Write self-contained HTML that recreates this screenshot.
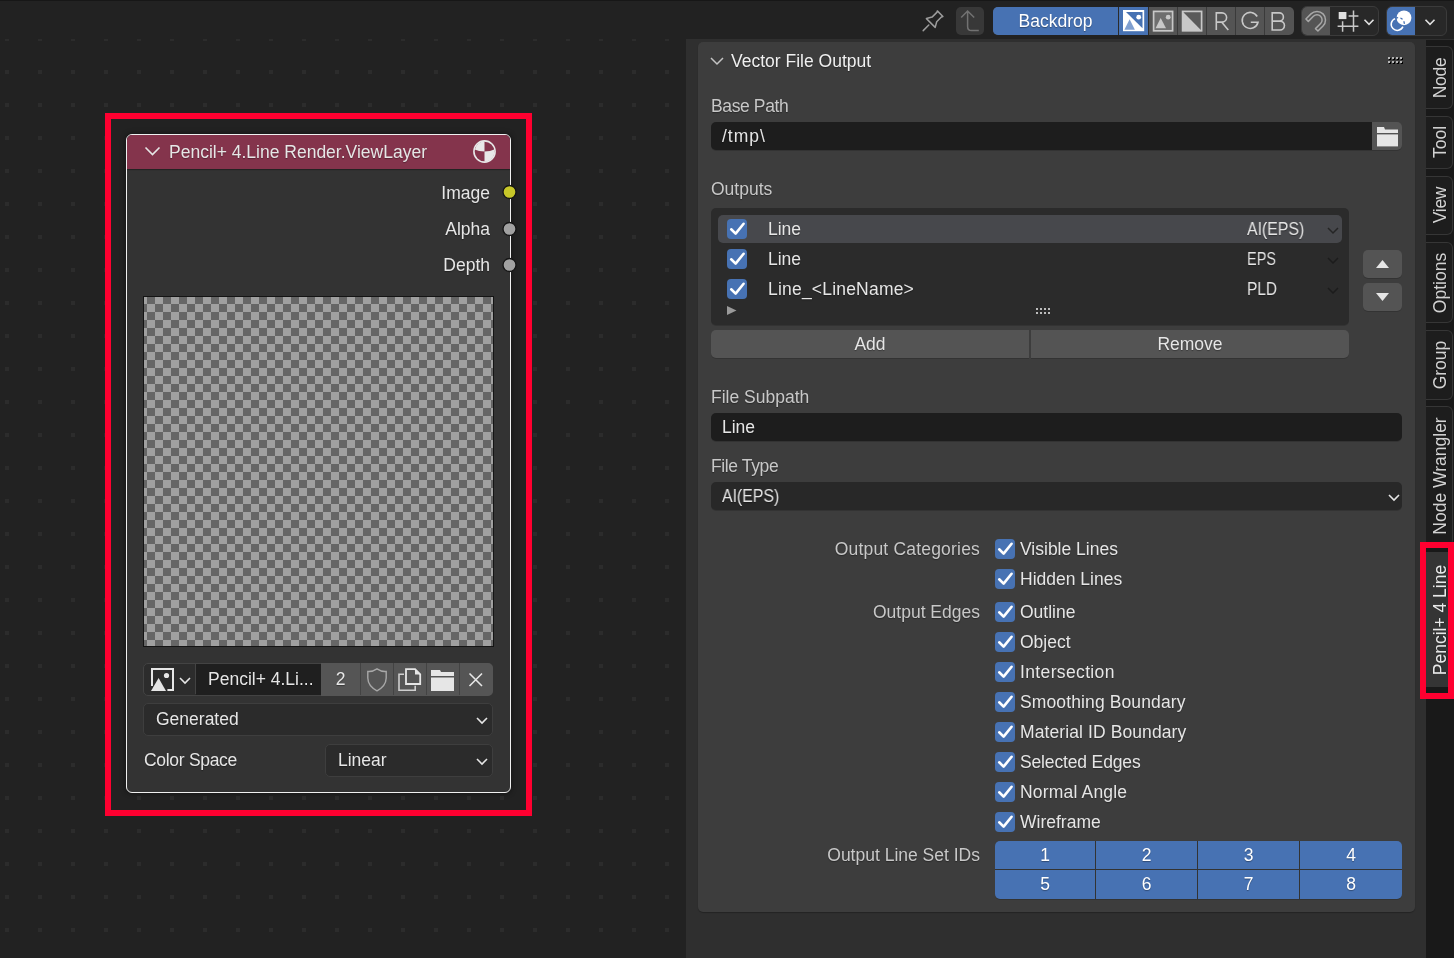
<!DOCTYPE html>
<html><head><meta charset="utf-8">
<style>
*{margin:0;padding:0;box-sizing:border-box}
html,body{width:1454px;height:958px;overflow:hidden;background:#222222;font-family:"Liberation Sans",sans-serif}
.a{position:absolute}
.t{position:absolute;will-change:transform;font-size:17.5px;line-height:20px;white-space:nowrap;color:#e6e6e6;text-shadow:0 1px 1px rgba(0,0,0,.35)}
.r{text-align:right}
.c{text-align:center}
.lbl{color:#c8c8c8}
.em{box-shadow:0 1px 0 rgba(0,0,0,.16)}
svg{position:absolute;overflow:visible}
</style></head><body>
<!-- dot grid -->
<svg style="left:0;top:0" width="1454" height="958"><defs><pattern id="dg" x="5" y="4" width="33" height="33" patternUnits="userSpaceOnUse"><rect width="4" height="4" fill="#2c2c2c"/></pattern></defs><rect width="1454" height="958" fill="url(#dg)"/></svg>


<!-- ============ HEADER ============ -->
<div class="a" style="left:0;top:0;width:1454px;height:39px;background:#222222;border-top:1px solid #171717"></div>

<!-- ============ SIDEBAR ============ -->
<div class="a" style="left:686px;top:39px;width:740px;height:919px;background:#2f2f2f"></div>
<div class="a" style="left:1426px;top:39px;width:28px;height:919px;background:#191919"></div>
<div class="a" style="left:686px;top:39px;width:768px;height:1px;background:#2f2f2f"></div>
<div class="a" style="left:698px;top:42px;width:717px;height:870px;background:#3d3d3d;border-radius:5px;box-shadow:0 1px 1px rgba(0,0,0,.25)"></div>
<!-- panel header -->
<svg style="left:709px;top:55.5px" width="18" height="12"><path d="M2 2 L8 8 L14 2" fill="none" stroke="#c4c4c4" stroke-width="1.5"/></svg>
<div class="t" style="left:731px;top:51px;color:#f0f0f0">Vector File Output</div>
<svg style="left:1388px;top:57px" width="16" height="8">
 <g fill="#000"><rect x="1" y="1" width="2" height="2"/><rect x="5" y="1" width="2" height="2"/><rect x="9" y="1" width="2" height="2"/><rect x="13" y="1" width="2" height="2"/><rect x="1" y="5" width="2" height="2"/><rect x="5" y="5" width="2" height="2"/><rect x="9" y="5" width="2" height="2"/><rect x="13" y="5" width="2" height="2"/></g>
 <g fill="#b4b4b4"><rect x="0" y="0" width="2" height="2"/><rect x="4" y="0" width="2" height="2"/><rect x="8" y="0" width="2" height="2"/><rect x="12" y="0" width="2" height="2"/><rect x="0" y="4" width="2" height="2"/><rect x="4" y="4" width="2" height="2"/><rect x="8" y="4" width="2" height="2"/><rect x="12" y="4" width="2" height="2"/></g>
</svg>

<!-- base path -->
<div class="t lbl" style="left:711px;top:96px;letter-spacing:-0.375px">Base Path</div>
<div class="a em" style="left:711px;top:122px;width:661px;height:28px;background:#1d1d1d;border-radius:5px 0 0 5px"></div>
<div class="t" style="left:722px;top:126px;letter-spacing:1px">/tmp\</div>
<div class="a em" style="left:1372px;top:122px;width:30px;height:28px;background:#545454;border-radius:0 5px 5px 0"></div>
<svg style="left:1376px;top:126px" width="24" height="22" viewBox="0 0 24 22">
  <path d="M1 1 L8 1 L9 3.5 L22 3.5 L22 7 L1 7 Z" fill="#e6e6e6"/>
  <rect x="1" y="8.4" width="21" height="12" fill="#e6e6e6"/>
</svg>

<!-- outputs -->
<div class="t lbl" style="left:711px;top:179px">Outputs</div>
<div class="a em" style="left:711px;top:208px;width:638px;height:117px;background:#2b2b2b;border-radius:5px"></div>
<div class="a" style="left:718px;top:215px;width:624px;height:28px;background:#47484c;border-radius:5px"></div>

<svg style="left:727px;top:219px" width="20" height="20" viewBox="0 0 20 20"><rect x="0" y="0" width="20" height="20" rx="4" fill="#4772b3"/><path d="M4.2 10.3 L8.6 14.6 L16.6 4.8" fill="none" stroke="#ffffff" stroke-width="2.6" stroke-linecap="round" stroke-linejoin="round"/></svg>
<svg style="left:727px;top:249px" width="20" height="20" viewBox="0 0 20 20"><rect x="0" y="0" width="20" height="20" rx="4" fill="#4772b3"/><path d="M4.2 10.3 L8.6 14.6 L16.6 4.8" fill="none" stroke="#ffffff" stroke-width="2.6" stroke-linecap="round" stroke-linejoin="round"/></svg>
<svg style="left:727px;top:279px" width="20" height="20" viewBox="0 0 20 20"><rect x="0" y="0" width="20" height="20" rx="4" fill="#4772b3"/><path d="M4.2 10.3 L8.6 14.6 L16.6 4.8" fill="none" stroke="#ffffff" stroke-width="2.6" stroke-linecap="round" stroke-linejoin="round"/></svg>
<div class="t" style="left:768px;top:219px">Line</div>
<div class="t" style="left:1247px;top:219px;transform:scaleX(0.905);transform-origin:0 0">AI(EPS)</div>
<svg style="left:1326px;top:226px" width="14" height="10"><path d="M2 2 L7 7 L12 2" fill="none" stroke="#252525" stroke-width="1.5"/></svg>
<div class="t" style="left:768px;top:249px">Line</div>
<div class="t" style="left:1247px;top:249px;transform:scaleX(0.83);transform-origin:0 0">EPS</div>
<svg style="left:1326px;top:256px" width="14" height="10"><path d="M2 2 L7 7 L12 2" fill="none" stroke="#1c1c1c" stroke-width="1.5"/></svg>
<div class="t" style="left:768px;top:279px;letter-spacing:0.2px">Line_&lt;LineName&gt;</div>
<div class="t" style="left:1247px;top:279px;transform:scaleX(0.88);transform-origin:0 0">PLD</div>
<svg style="left:1326px;top:286px" width="14" height="10"><path d="M2 2 L7 7 L12 2" fill="none" stroke="#1c1c1c" stroke-width="1.5"/></svg>

<svg style="left:727px;top:306px" width="10" height="10"><path d="M0 0 L9.5 4.5 L0 9 Z" fill="#9a9a9a"/></svg>
<svg style="left:1036px;top:308px" width="16" height="8">
 <g fill="#bdbdbd"><rect x="0" y="0" width="2" height="2"/><rect x="4" y="0" width="2" height="2"/><rect x="8" y="0" width="2" height="2"/><rect x="12" y="0" width="2" height="2"/><rect x="0" y="4" width="2" height="2"/><rect x="4" y="4" width="2" height="2"/><rect x="8" y="4" width="2" height="2"/><rect x="12" y="4" width="2" height="2"/></g>
</svg>
<!-- up/down -->
<div class="a em" style="left:1363px;top:250px;width:39px;height:28px;background:#545454;border-radius:5px"></div>
<div class="a em" style="left:1363px;top:283px;width:39px;height:28px;background:#545454;border-radius:5px"></div>
<svg style="left:1375px;top:258px" width="16" height="12"><path d="M1 10 L7.5 2 L14 10 Z" fill="#e6e6e6"/></svg>
<svg style="left:1375px;top:291px" width="16" height="12"><path d="M1 2 L7.5 10 L14 2 Z" fill="#e6e6e6"/></svg>
<!-- add/remove -->
<div class="a em" style="left:711px;top:330px;width:318px;height:28px;background:#545454;border-radius:5px 0 0 5px"></div>
<div class="a em" style="left:1031px;top:330px;width:318px;height:28px;background:#545454;border-radius:0 5px 5px 0"></div>
<div class="t c" style="left:711px;top:334px;width:318px">Add</div>
<div class="t c" style="left:1031px;top:334px;width:318px">Remove</div>

<!-- file subpath -->
<div class="t lbl" style="left:711px;top:387px">File Subpath</div>
<div class="a em" style="left:711px;top:413px;width:691px;height:28px;background:#1d1d1d;border-radius:5px"></div>
<div class="t" style="left:722px;top:417px">Line</div>
<!-- file type -->
<div class="t lbl" style="left:711px;top:456px;letter-spacing:-0.375px">File Type</div>
<div class="a em" style="left:711px;top:482px;width:691px;height:28px;background:#282828;border-radius:5px"></div>
<div class="t" style="left:722px;top:486px;transform:scaleX(0.905);transform-origin:0 0">AI(EPS)</div>

<svg style="left:1386.5px;top:492.5px" width="14" height="10"><path d="M2 2 L7 7 L12 2" fill="none" stroke="#e6e6e6" stroke-width="1.6"/></svg>
<div class="t lbl r" style="left:780px;top:539px;width:200px;letter-spacing:0.19px">Output Categories</div>
<div class="t lbl r" style="left:780px;top:602px;width:200px">Output Edges</div>
<svg style="left:995px;top:539px" width="20" height="20" viewBox="0 0 20 20"><rect x="0" y="0" width="20" height="20" rx="4" fill="#4772b3"/><path d="M4.2 10.3 L8.6 14.6 L16.6 4.8" fill="none" stroke="#ffffff" stroke-width="2.6" stroke-linecap="round" stroke-linejoin="round"/></svg>
<div class="t" style="left:1020px;top:539px">Visible Lines</div>
<svg style="left:995px;top:569px" width="20" height="20" viewBox="0 0 20 20"><rect x="0" y="0" width="20" height="20" rx="4" fill="#4772b3"/><path d="M4.2 10.3 L8.6 14.6 L16.6 4.8" fill="none" stroke="#ffffff" stroke-width="2.6" stroke-linecap="round" stroke-linejoin="round"/></svg>
<div class="t" style="left:1020px;top:569px">Hidden Lines</div>
<svg style="left:995px;top:602px" width="20" height="20" viewBox="0 0 20 20"><rect x="0" y="0" width="20" height="20" rx="4" fill="#4772b3"/><path d="M4.2 10.3 L8.6 14.6 L16.6 4.8" fill="none" stroke="#ffffff" stroke-width="2.6" stroke-linecap="round" stroke-linejoin="round"/></svg>
<div class="t" style="left:1020px;top:602px">Outline</div>
<svg style="left:995px;top:632px" width="20" height="20" viewBox="0 0 20 20"><rect x="0" y="0" width="20" height="20" rx="4" fill="#4772b3"/><path d="M4.2 10.3 L8.6 14.6 L16.6 4.8" fill="none" stroke="#ffffff" stroke-width="2.6" stroke-linecap="round" stroke-linejoin="round"/></svg>
<div class="t" style="left:1020px;top:632px">Object</div>
<svg style="left:995px;top:662px" width="20" height="20" viewBox="0 0 20 20"><rect x="0" y="0" width="20" height="20" rx="4" fill="#4772b3"/><path d="M4.2 10.3 L8.6 14.6 L16.6 4.8" fill="none" stroke="#ffffff" stroke-width="2.6" stroke-linecap="round" stroke-linejoin="round"/></svg>
<div class="t" style="left:1020px;top:662px;letter-spacing:0.36px">Intersection</div>
<svg style="left:995px;top:692px" width="20" height="20" viewBox="0 0 20 20"><rect x="0" y="0" width="20" height="20" rx="4" fill="#4772b3"/><path d="M4.2 10.3 L8.6 14.6 L16.6 4.8" fill="none" stroke="#ffffff" stroke-width="2.6" stroke-linecap="round" stroke-linejoin="round"/></svg>
<div class="t" style="left:1020px;top:692px;letter-spacing:0.12px">Smoothing Boundary</div>
<svg style="left:995px;top:722px" width="20" height="20" viewBox="0 0 20 20"><rect x="0" y="0" width="20" height="20" rx="4" fill="#4772b3"/><path d="M4.2 10.3 L8.6 14.6 L16.6 4.8" fill="none" stroke="#ffffff" stroke-width="2.6" stroke-linecap="round" stroke-linejoin="round"/></svg>
<div class="t" style="left:1020px;top:722px;letter-spacing:0.1px">Material ID Boundary</div>
<svg style="left:995px;top:752px" width="20" height="20" viewBox="0 0 20 20"><rect x="0" y="0" width="20" height="20" rx="4" fill="#4772b3"/><path d="M4.2 10.3 L8.6 14.6 L16.6 4.8" fill="none" stroke="#ffffff" stroke-width="2.6" stroke-linecap="round" stroke-linejoin="round"/></svg>
<div class="t" style="left:1020px;top:752px;letter-spacing:-0.15px">Selected Edges</div>
<svg style="left:995px;top:782px" width="20" height="20" viewBox="0 0 20 20"><rect x="0" y="0" width="20" height="20" rx="4" fill="#4772b3"/><path d="M4.2 10.3 L8.6 14.6 L16.6 4.8" fill="none" stroke="#ffffff" stroke-width="2.6" stroke-linecap="round" stroke-linejoin="round"/></svg>
<div class="t" style="left:1020px;top:782px;letter-spacing:0.18px">Normal Angle</div>
<svg style="left:995px;top:812px" width="20" height="20" viewBox="0 0 20 20"><rect x="0" y="0" width="20" height="20" rx="4" fill="#4772b3"/><path d="M4.2 10.3 L8.6 14.6 L16.6 4.8" fill="none" stroke="#ffffff" stroke-width="2.6" stroke-linecap="round" stroke-linejoin="round"/></svg>
<div class="t" style="left:1020px;top:812px">Wireframe</div>

<div class="t lbl r" style="left:780px;top:845px;width:200px">Output Line Set IDs</div>
<div class="a em" style="left:995px;top:841px;width:407px;height:58px;background:#4772b3;border-radius:5px"></div>
<div class="a" style="left:995px;top:869px;width:407px;height:1px;background:#333"></div>
<div class="a" style="left:1095px;top:841px;width:1px;height:58px;background:#333"></div>
<div class="a" style="left:1197px;top:841px;width:1px;height:58px;background:#333"></div>
<div class="a" style="left:1299px;top:841px;width:1px;height:58px;background:#333"></div>

<div class="t c" style="left:995px;top:845px;width:100px;color:#fff">1</div>
<div class="t c" style="left:1096px;top:845px;width:101px;color:#fff">2</div>
<div class="t c" style="left:1198px;top:845px;width:101px;color:#fff">3</div>
<div class="t c" style="left:1300px;top:845px;width:102px;color:#fff">4</div>
<div class="t c" style="left:995px;top:874px;width:100px;color:#fff">5</div>
<div class="t c" style="left:1096px;top:874px;width:101px;color:#fff">6</div>
<div class="t c" style="left:1198px;top:874px;width:101px;color:#fff">7</div>
<div class="t c" style="left:1300px;top:874px;width:102px;color:#fff">8</div>

<!-- header tools -->
<svg style="left:918px;top:6px" width="30" height="30" viewBox="0 0 30 30">
 <g fill="none" stroke="#9c9c9c" stroke-width="1.5" stroke-linejoin="round" stroke-linecap="round">
  <path d="M8.4 12.6 L14.1 11.1 L18.8 6.4 L19.3 4.9 L24.9 10.5 L23.4 11 L18.7 15.7 L17.2 21.4 Z"/>
  <path d="M10.8 19 L5.2 24.6"/>
 </g>
</svg>
<div class="a" style="left:956px;top:7px;width:28px;height:28px;background:#383838;border-radius:5px"></div>
<svg style="left:956px;top:7px" width="28" height="28"><path d="M5.2 10.5 L11.6 4 L18.2 10.5 M11.6 4 L11.6 19.5 Q11.6 23.6 15.6 23.6 L22.8 23.6" fill="none" stroke="#727272" stroke-width="1.5"/></svg>

<div class="a" style="left:993px;top:7px;width:301px;height:28px;background:#545454;border-radius:5px"></div>
<div class="a" style="left:993px;top:7px;width:155px;height:28px;background:#4772b3;border-radius:5px 0 0 5px"></div>
<div class="a" style="left:1118px;top:7px;width:1px;height:28px;background:#2b2b2b"></div>
<div class="a" style="left:1148px;top:7px;width:1px;height:28px;background:#2b2b2b"></div>
<div class="a" style="left:1177px;top:7px;width:1px;height:28px;background:#3a3a3a"></div>
<div class="a" style="left:1206px;top:7px;width:1px;height:28px;background:#3a3a3a"></div>
<div class="a" style="left:1235px;top:7px;width:1px;height:28px;background:#3a3a3a"></div>
<div class="a" style="left:1264px;top:7px;width:1px;height:28px;background:#3a3a3a"></div>
<div class="t c" style="left:993px;top:11px;width:125px;color:#fff">Backdrop</div>
<!-- icon 1 -->
<svg style="left:1122px;top:9px" width="24" height="24" viewBox="0 0 24 24">
 <rect x="1.85" y="1.85" width="19.5" height="19.5" fill="#fff" stroke="#fff" stroke-width="1.7"/>
 <path d="M4 3 L20.5 3 L20.5 19.3 Z" fill="#4772b3"/>
 <circle cx="16.7" cy="8.2" r="2.4" fill="#fff"/>
 <path d="M7.6 10.2 L12.9 20.7 L2.4 20.7 Z" fill="#7f9fd0"/>
</svg>
<!-- icon 2 -->
<svg style="left:1151px;top:9px" width="24" height="24" viewBox="0 0 24 24">
 <rect x="2.6" y="2.4" width="19" height="19.4" fill="#6e6e6e" stroke="#c8c8c8" stroke-width="1.7"/>
 <path d="M9.7 8.9 L15 19.2 L4.6 19.2 Z" fill="#c8c8c8"/>
 <circle cx="17.2" cy="8.2" r="2.4" fill="#c8c8c8"/>
</svg>
<!-- icon 3 -->
<svg style="left:1180px;top:9px" width="24" height="24" viewBox="0 0 24 24">
 <rect x="2.6" y="2.4" width="19" height="19.4" fill="#5a5a5a" stroke="#c8c8c8" stroke-width="1.7"/>
 <path d="M2.6 2.4 L21.6 21.8 L2.6 21.8 Z" fill="#c8c8c8"/>
</svg>
<!-- R G B -->
<svg style="left:1207px;top:7px" width="87" height="28" viewBox="0 0 87 28">
 <g fill="none" stroke="#c8c8c8" stroke-width="1.6">
  <path d="M9.3 23 L9.3 5.9 L15 5.9 A4.6 4.6 0 0 1 15 15.1 L9.3 15.1 M14.6 15.1 L21.3 23"/>
  <path d="M50.2 9.5 A8 8 0 1 0 51 15.2 L43.8 15.2"/>
  <path d="M65.2 23 L65.2 5.9 L72.3 5.9 A4.1 4.1 0 0 1 72.3 14.1 L65.2 14.1 M72.3 14.1 L73 14.1 A4.45 4.45 0 0 1 73 23 L64.4 23"/>
 </g>
</svg>

<!-- snap group -->
<div class="a" style="left:1301px;top:6px;width:78px;height:30px;background:#282828;border:1px solid #3b3b3b;border-radius:6px"></div>
<div class="a" style="left:1302px;top:7px;width:28px;height:28px;background:#555555;border-radius:5px 0 0 5px"></div>
<svg style="left:1302px;top:7px" width="28" height="28" viewBox="0 0 28 28">
 <g transform="translate(15 12.9) rotate(45)" fill="none" stroke="#a8a8a8" stroke-width="1.5" stroke-linejoin="round">
  <path d="M-8.5 7.2 L-8.5 0 A8.5 8.5 0 0 1 8.5 0 L8.5 7.2 L5.1 7.2 L5.1 0 A5.1 5.1 0 0 0 -5.1 0 L-5.1 7.2 Z"/>
 </g>
</svg>
<svg style="left:1330px;top:7px" width="49" height="28" viewBox="0 0 49 28">
 <rect x="8.7" y="5" width="7.7" height="7.1" fill="#e0e0e0"/>
 <g stroke="#c8c8c8" stroke-width="1.5" fill="none">
  <path d="M12.6 14.3 L12.6 24.7 M23.5 3.4 L23.5 24.7 M18.6 8.9 L28.4 8.9 M7.6 19.2 L28.4 19.2"/>
  <path d="M34.5 12.7 L39 17.3 L43.5 12.7" stroke="#e0e0e0" stroke-width="1.6"/>
 </g>
</svg>

<!-- overlay group -->
<div class="a" style="left:1386px;top:6px;width:61px;height:30px;background:#282828;border:1px solid #3b3b3b;border-radius:6px"></div>
<div class="a" style="left:1387px;top:7px;width:28px;height:28px;background:#4772b3;border-radius:5px 0 0 5px"></div>
<svg style="left:1387px;top:7px" width="28" height="28" viewBox="0 0 28 28">
 <circle cx="17" cy="10.85" r="7.4" fill="#fff"/>
 <path d="M8.11 11.61 A6.1 6.1 0 1 0 15.93 19.64" fill="none" stroke="#fff" stroke-width="1.5"/>
 <path d="M8.6 11.2 A6.1 6.1 0 0 1 16.9 18.9" fill="none" stroke="#4772b3" stroke-width="1.3" stroke-dasharray="2.6 2.2"/>
</svg>
<svg style="left:1415px;top:7px" width="31" height="28"><path d="M10.5 12.7 L15 17.3 L19.5 12.7" fill="none" stroke="#e0e0e0" stroke-width="1.6"/></svg>

<!-- tabs -->
<div class="a" style="left:1426px;top:46.0px;width:27px;height:63.4px;background:#1d1d1d;border:1px solid #363636;border-left:none;border-radius:0 6px 6px 0"></div>
<div class="t c" style="left:1339.5px;top:67.7px;width:200px;color:#d2d2d2;transform:rotate(-90deg);letter-spacing:-0.3px">Node</div>
<div class="a" style="left:1426px;top:115.7px;width:27px;height:53.2px;background:#1d1d1d;border:1px solid #363636;border-left:none;border-radius:0 6px 6px 0"></div>
<div class="t c" style="left:1339.5px;top:132.3px;width:200px;color:#d2d2d2;transform:rotate(-90deg)">Tool</div>
<div class="a" style="left:1426px;top:175.9px;width:27px;height:58.7px;background:#1d1d1d;border:1px solid #363636;border-left:none;border-radius:0 6px 6px 0"></div>
<div class="t c" style="left:1339.5px;top:195.2px;width:200px;color:#d2d2d2;transform:rotate(-90deg);letter-spacing:-0.3px">View</div>
<div class="a" style="left:1426px;top:242.3px;width:27px;height:80.9px;background:#1d1d1d;border:1px solid #363636;border-left:none;border-radius:0 6px 6px 0"></div>
<div class="t c" style="left:1339.5px;top:272.8px;width:200px;color:#d2d2d2;transform:rotate(-90deg)">Options</div>
<div class="a" style="left:1426px;top:330.2px;width:27px;height:69.4px;background:#1d1d1d;border:1px solid #363636;border-left:none;border-radius:0 6px 6px 0"></div>
<div class="t c" style="left:1339.5px;top:354.9px;width:200px;color:#d2d2d2;transform:rotate(-90deg)">Group</div>
<div class="a" style="left:1426px;top:406.1px;width:27px;height:139.9px;background:#1d1d1d;border:1px solid #363636;border-left:none;border-radius:0 6px 6px 0"></div>
<div class="t c" style="left:1339.5px;top:466.1px;width:200px;color:#d2d2d2;transform:rotate(-90deg)">Node Wrangler</div>
<div class="a" style="left:1426px;top:552.4px;width:28px;height:134.6px;background:#353535"></div>
<div class="t c" style="left:1339.5px;top:609.7px;width:200px;color:#e8e8e8;transform:rotate(-90deg)">Pencil+ 4 Line</div>
<div class="a" style="left:1420px;top:542px;width:34px;height:157px;border:6px solid #ff0030"></div>
<!-- ============ NODE ============ -->
<div class="a" style="left:126px;top:134px;width:385px;height:659px;background:#333333;border:1px solid #f0f0f0;border-radius:6px;overflow:hidden;box-shadow:0 0 5px 1px rgba(0,0,0,.35)">
  <div class="a" style="left:0;top:0;width:383px;height:34px;background:#84344c;box-shadow:0 1px 1px rgba(0,0,0,.3)"></div>
</div>
<!-- header chevron -->
<svg style="left:144px;top:146px" width="18" height="10"><path d="M1.5 1.5 L8.5 8.5 L15.5 1.5" fill="none" stroke="#e6e6e6" stroke-width="1.6"/></svg>
<div class="t" style="left:169px;top:142px">Pencil+ 4.Line Render.ViewLayer</div>
<!-- render icon -->
<svg style="left:473px;top:140px" width="23" height="23" viewBox="0 0 23 23">
  <circle cx="11.5" cy="11.5" r="10.6" fill="none" stroke="#e8e8e8" stroke-width="1.6"/>
  <path d="M11.5 1.2 L11.5 11.5 Q5.5 11.5 1.8 9.5 A10.3 10.3 0 0 1 11.5 1.2 Z" fill="#e8e8e8"/>
  <path d="M11.5 11.5 Q17.5 11.5 21.2 9.5 A10.3 10.3 0 0 1 11.5 21.8 Z" fill="#e8e8e8"/>
</svg>
<!-- sockets -->
<div class="t r" style="left:390px;top:182.5px;width:100px">Image</div>
<div class="t r" style="left:390px;top:218.5px;width:100px">Alpha</div>
<div class="t r" style="left:390px;top:254.5px;width:100px">Depth</div>
<svg style="left:502px;top:185px" width="15" height="15"><circle cx="7.5" cy="7" r="6.5" fill="#c7c729" stroke="#151515" stroke-width="1.3"/></svg>
<svg style="left:502px;top:221.5px" width="15" height="15"><circle cx="7.5" cy="7" r="6.5" fill="#a1a1a1" stroke="#151515" stroke-width="1.3"/></svg>
<svg style="left:502px;top:258px" width="15" height="15"><circle cx="7.5" cy="7" r="6.5" fill="#a1a1a1" stroke="#151515" stroke-width="1.3"/></svg>

<!-- preview -->
<div class="a" style="left:143px;top:296px;width:351px;height:351px;background:#141414"></div>
<svg style="left:144px;top:297px" width="349" height="349"><defs><pattern id="ck" x="3" y="7" width="16" height="16" patternUnits="userSpaceOnUse"><rect width="16" height="16" fill="#666666"/><rect width="8" height="8" fill="#a0a0a0"/><rect x="8" y="8" width="8" height="8" fill="#a0a0a0"/></pattern></defs><rect width="349" height="349" fill="url(#ck)"/></svg>

<!-- ID row -->
<div class="a" style="left:143px;top:663px;width:350px;height:33px;border-radius:5px;background:#2c2c2c;border:1px solid #434343"></div>
<div class="a" style="left:196px;top:664px;width:125px;height:31px;background:#1f1f1f"></div>
<div class="a" style="left:195px;top:664px;width:1px;height:30px;background:#434343"></div>
<div class="a" style="left:321px;top:663px;width:172px;height:33px;background:#555555;border-radius:0 5px 5px 0"></div>
<div class="a" style="left:360px;top:663px;width:1px;height:32px;background:#434343"></div>
<div class="a" style="left:393px;top:663px;width:1px;height:32px;background:#434343"></div>
<div class="a" style="left:426px;top:663px;width:1px;height:32px;background:#434343"></div>
<div class="a" style="left:459px;top:663px;width:1px;height:32px;background:#434343"></div>
<!-- image icon -->
<svg style="left:150px;top:667px" width="26" height="26" viewBox="0 0 26 26">
  <path d="M2 19 L2 2 L23 2 L23 23 L17.4 23" fill="none" stroke="#e6e6e6" stroke-width="2"/>
  <path d="M1 24 L8.6 11 L16 24 Z" fill="#e6e6e6"/>
  <circle cx="16.5" cy="8.5" r="2.6" fill="#e6e6e6"/>
</svg>
<svg style="left:178px;top:676px" width="14" height="10"><path d="M2 2 L7 7 L12 2" fill="none" stroke="#e6e6e6" stroke-width="1.6"/></svg>
<div class="t" style="left:208px;top:669px">Pencil+ 4.Li...</div>
<div class="t c" style="left:321px;top:669px;width:39px">2</div>
<!-- shield -->
<svg style="left:366px;top:667px" width="24" height="26" viewBox="0 0 24 26"><path d="M11 1.8 Q6 5 1.8 4.5 L1.8 11 Q2 19 11 23.8 Q20 19 20.2 11 L20.2 4.5 Q16 5 11 1.8 Z" fill="none" stroke="#a8a8a8" stroke-width="1.4"/></svg>
<!-- copy -->
<svg style="left:397px;top:667px" width="26" height="26" viewBox="0 0 26 26">
  <path d="M7 7.2 L2 7.2 L2 23.2 L18.2 23.2 L18.2 18.8" fill="none" stroke="#cfcfcf" stroke-width="1.6"/>
  <path d="M9 2.2 L18 2.2 L23.2 7.4 L23.2 17 L9 17 Z" fill="none" stroke="#e6e6e6" stroke-width="1.8"/>
  <path d="M18 1.4 L24 7.4 L18 7.4 Z" fill="#e6e6e6"/>
</svg>
<!-- folder -->
<svg style="left:430px;top:669px" width="26" height="24" viewBox="0 0 26 24">
  <path d="M1 1 L10 1 L11 3 L24 3 L24 7 L1 7 Z" fill="#e6e6e6"/>
  <rect x="1" y="8.5" width="23" height="13.5" fill="#e6e6e6"/>
</svg>
<!-- X -->
<svg style="left:468px;top:672px" width="16" height="16"><path d="M1.5 1.5 L14 14 M14 1.5 L1.5 14" stroke="#e6e6e6" stroke-width="1.6"/></svg>

<!-- Generated dropdown -->
<div class="a" style="left:143px;top:703px;width:350px;height:33px;border-radius:5px;background:#2b2b2b;border:1px solid #3e3e3e"></div>
<div class="t" style="left:156px;top:709px">Generated</div>
<svg style="left:475px;top:716px" width="14" height="10"><path d="M2 2 L7 7 L12 2" fill="none" stroke="#e6e6e6" stroke-width="1.6"/></svg>
<!-- color space -->
<div class="t" style="left:144px;top:750px;letter-spacing:-0.3px">Color Space</div>
<div class="a" style="left:325px;top:744px;width:168px;height:33px;border-radius:5px;background:#2b2b2b;border:1px solid #3e3e3e"></div>
<div class="t" style="left:338px;top:750px">Linear</div>
<svg style="left:475px;top:757px" width="14" height="10"><path d="M2 2 L7 7 L12 2" fill="none" stroke="#e6e6e6" stroke-width="1.6"/></svg>

<!-- red box -->
<div class="a" style="left:105px;top:113px;width:427px;height:703px;border:6px solid #ff0030"></div>

</body></html>
